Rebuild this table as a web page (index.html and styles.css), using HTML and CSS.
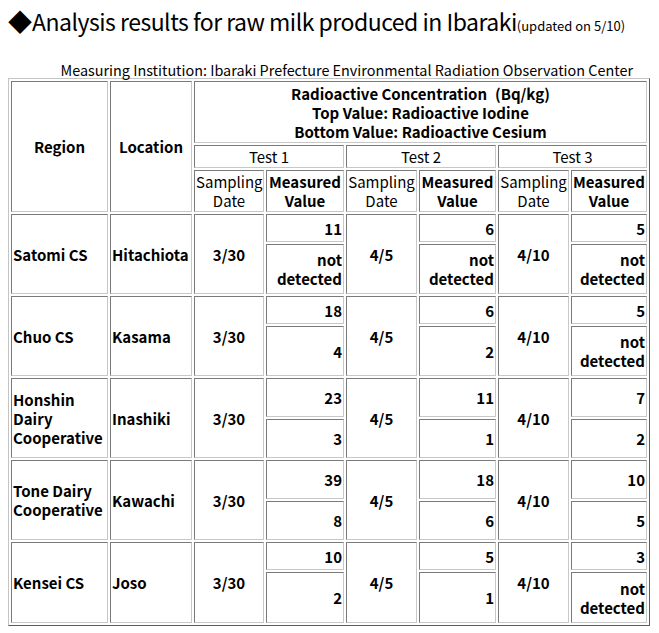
FILE: index.html
```html
<!DOCTYPE html>
<html lang="en">
<head>
<meta charset="utf-8">
<title>Analysis results for raw milk produced in Ibaraki</title>
<link rel="stylesheet" href="styles.css">
</head>
<body>
<h1 class="title"><span class="mark">◆</span>Analysis results for raw milk produced in Ibaraki<span class="updated">(updated on 5/10)</span></h1>
<p class="source">Measuring Institution: Ibaraki Prefecture Environmental Radiation Observation Center</p>
<table class="results">
  <colgroup>
    <col class="c-region">
    <col class="c-loc">
    <col class="c-date">
    <col class="c-val1">
    <col class="c-date2">
    <col class="c-val2">
    <col class="c-date2">
    <col class="c-val3">
  </colgroup>
  <tr class="h1">
    <th rowspan="3">Region</th>
    <th rowspan="3">Location</th>
    <th colspan="6">Radioactive Concentration<span class="unit">(Bq/kg)</span><br>Top Value: Radioactive Iodine<br>Bottom Value: Radioactive Cesium</th>
  </tr>
  <tr class="h2">
    <th colspan="2" class="light">Test 1</th>
    <th colspan="2" class="light">Test 2</th>
    <th colspan="2" class="light">Test 3</th>
  </tr>
  <tr class="h3">
    <th class="light">Sampling<br>Date</th>
    <th>Measured<br>Value</th>
    <th class="light">Sampling<br>Date</th>
    <th>Measured<br>Value</th>
    <th class="light">Sampling<br>Date</th>
    <th>Measured<br>Value</th>
  </tr>

  <tr class="sa">
    <td rowspan="2" class="l">Satomi CS</td>
    <td rowspan="2" class="l">Hitachiota</td>
    <td rowspan="2" class="c">3/30</td>
    <td class="r">11</td>
    <td rowspan="2" class="c">4/5</td>
    <td class="r">6</td>
    <td rowspan="2" class="c">4/10</td>
    <td class="r">5</td>
  </tr>
  <tr class="sb">
    <td class="r">not<br>detected</td>
    <td class="r">not<br>detected</td>
    <td class="r">not<br>detected</td>
  </tr>

  <tr class="sa">
    <td rowspan="2" class="l">Chuo CS</td>
    <td rowspan="2" class="l">Kasama</td>
    <td rowspan="2" class="c">3/30</td>
    <td class="r">18</td>
    <td rowspan="2" class="c">4/5</td>
    <td class="r">6</td>
    <td rowspan="2" class="c">4/10</td>
    <td class="r">5</td>
  </tr>
  <tr class="sb">
    <td class="r">4</td>
    <td class="r">2</td>
    <td class="r">not<br>detected</td>
  </tr>

  <tr class="ma">
    <td rowspan="2" class="l">Honshin<br>Dairy<br>Cooperative</td>
    <td rowspan="2" class="l">Inashiki</td>
    <td rowspan="2" class="c">3/30</td>
    <td class="r">23</td>
    <td rowspan="2" class="c">4/5</td>
    <td class="r">11</td>
    <td rowspan="2" class="c">4/10</td>
    <td class="r">7</td>
  </tr>
  <tr class="mb">
    <td class="r">3</td>
    <td class="r">1</td>
    <td class="r">2</td>
  </tr>

  <tr class="ma">
    <td rowspan="2" class="l">Tone Dairy<br>Cooperative</td>
    <td rowspan="2" class="l">Kawachi</td>
    <td rowspan="2" class="c">3/30</td>
    <td class="r">39</td>
    <td rowspan="2" class="c">4/5</td>
    <td class="r">18</td>
    <td rowspan="2" class="c">4/10</td>
    <td class="r">10</td>
  </tr>
  <tr class="mb">
    <td class="r">8</td>
    <td class="r">6</td>
    <td class="r">5</td>
  </tr>

  <tr class="sa">
    <td rowspan="2" class="l">Kensei CS</td>
    <td rowspan="2" class="l">Joso</td>
    <td rowspan="2" class="c">3/30</td>
    <td class="r">10</td>
    <td rowspan="2" class="c">4/5</td>
    <td class="r">5</td>
    <td rowspan="2" class="c">4/10</td>
    <td class="r">3</td>
  </tr>
  <tr class="sb last">
    <td class="r">2</td>
    <td class="r">1</td>
    <td class="r">not<br>detected</td>
  </tr>
</table>
</body>
</html>
```

FILE: styles.css
```css
html, body {
  background: #ffffff;
}

body {
  margin: 0;
  padding: 8px;
  font-family: "Noto Sans CJK JP", "Liberation Sans", sans-serif;
  color: #000000;
}

.title {
  margin: 0;
  height: 26px;
  font-size: 23px;
  line-height: 26px;
  letter-spacing: -0.5px;
  font-weight: normal;
  white-space: nowrap;
}

.title .mark {
  font-size: 24px;
  line-height: 1;
  letter-spacing: 0;
}

.title .updated {
  font-size: 13px;
  line-height: 1;
  letter-spacing: 0;
}

.source {
  margin: 28px 0 0;
  height: 16px;
  width: 642px;
  box-sizing: border-box;
  padding-right: 17px;
  text-align: right;
  font-size: 14.4px;
  line-height: 16px;
  white-space: nowrap;
}

.results {
  width: 642px;
  table-layout: fixed;
  border-collapse: separate;
  border-spacing: 2px;
  border: 1px solid;
  border-color: #c4c4c4 #5c5c5c #5c5c5c #c4c4c4;
  font-size: 15px;
  line-height: 19px;
}

.c-region { width: 97px; }
.c-loc { width: 82px; }
.c-date { width: 70px; }
.c-val1 { width: 78px; }
.c-date2 { width: 71px; }
.c-val2 { width: 77px; }
.c-val3 { width: 76px; }

.results th,
.results td {
  border: 1px solid;
  border-color: #7a7a7a #c8c8c8 #c8c8c8 #7a7a7a;
  padding: 1px;
  font-weight: bold;
  vertical-align: middle;
  text-align: center;
  white-space: nowrap;
}

.results th.light {
  font-weight: normal;
}

.results .unit {
  margin-left: 8px;
}

.results .l { text-align: left; }
.results .c { text-align: center; }
.results .r { text-align: right; }

.h1 { height: 62px; }
.h2 { height: 23px; }
.h3 { height: 42px; }
.sa { height: 28px; }
.sb { height: 50px; }
.ma { height: 39px; }
.mb { height: 39px; }
.sb.last { height: 51px; }
```
